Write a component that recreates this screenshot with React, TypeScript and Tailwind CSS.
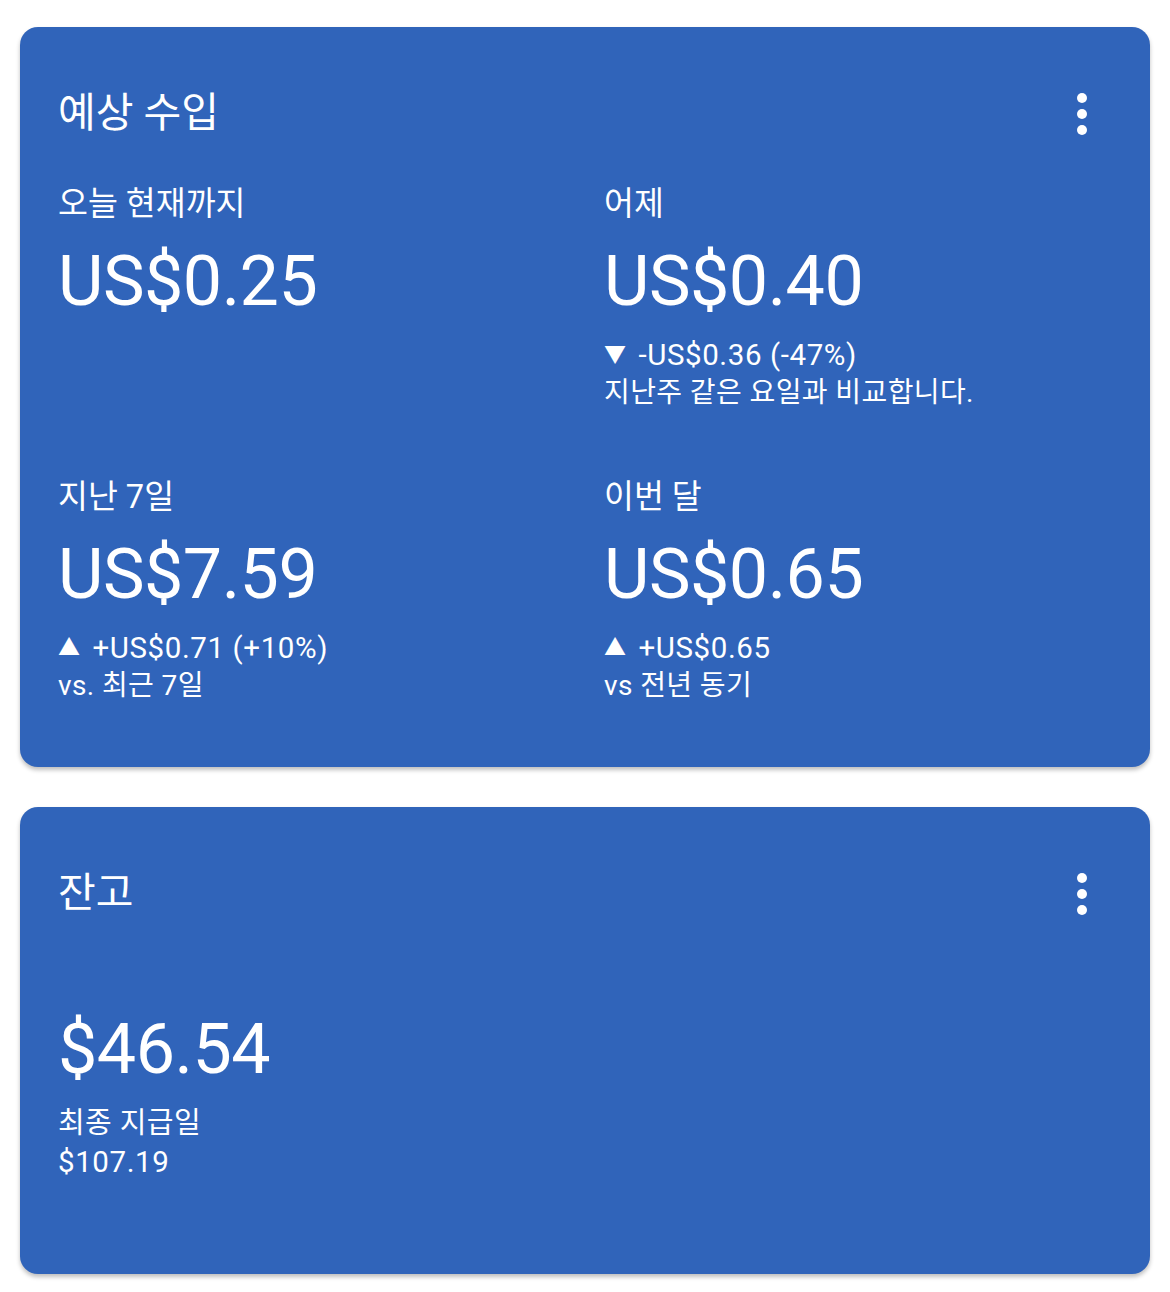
import React from "react";

const FONT = "font-['Roboto','Noto_Sans_CJK_KR',sans-serif]";

function MoreIcon() {
  return (
    <svg width="12" height="44" viewBox="0 0 12 44" className="fill-white">
      <circle cx="6" cy="6" r="5" />
      <circle cx="6" cy="22" r="5" />
      <circle cx="6" cy="38" r="5" />
    </svg>
  );
}

type Stat = {
  label: string;
  amount: string;
  delta?: { up: boolean; text: string; note: React.ReactNode };
};

// latin figures in the reference run a little wider than Roboto
const Num = ({ children }: { children: React.ReactNode }) => (
  <span className="text-[29.5px] tracking-[0.6px]">{children}</span>
);

const stats: Stat[] = [
  { label: "오늘 현재까지", amount: "US$0.25" },
  {
    label: "어제",
    amount: "US$0.40",
    delta: { up: false, text: "-US$0.36 (-47%)", note: "지난주 같은 요일과 비교합니다." },
  },
  {
    label: "지난 7일",
    amount: "US$7.59",
    delta: { up: true, text: "+US$0.71 (+10%)", note: "vs. 최근 7일" },
  },
  {
    label: "이번 달",
    amount: "US$0.65",
    delta: { up: true, text: "+US$0.65", note: "vs 전년 동기" },
  },
];

function StatBlock({ stat }: { stat: Stat }) {
  return (
    <div className="flex flex-col">
      <div className="text-[32.5px] leading-[40px]">{stat.label}</div>
      <div className="mt-[17px] text-[70px] leading-[80px] tracking-[-0.5px]">{stat.amount}</div>
      {stat.delta && (
        <div className="mt-[15px] text-[28px] leading-[38px] tracking-[0.4px]">
          <div className="flex items-center">
            <span className="mr-[12px] text-[22px]">{stat.delta.up ? "▲" : "▼"}</span>
            <Num>{stat.delta.text}</Num>
          </div>
          <div>{stat.delta.note}</div>
        </div>
      )}
    </div>
  );
}

function CardHeader({ title }: { title: string }) {
  return (
    <div className="flex items-center justify-between">
      <h2 className="text-[41px] leading-[48px]">{title}</h2>
      <div className="mr-[22px] mt-[2px]">
        <MoreIcon />
      </div>
    </div>
  );
}

export default function App() {
  return (
    <div className={`min-h-screen bg-white px-[20px] pt-[27px] pb-[18px] text-white ${FONT}`}>
      <div className="rounded-[18px] bg-[#3064ba] pl-[38px] pr-[40px] pt-[62px] pb-[62px] shadow-[0_3px_4px_rgba(0,0,0,0.25)]">
        <CardHeader title="예상 수입" />
        <div className="mt-[47px] grid grid-cols-2 gap-x-[40px] gap-y-[65px]">
          {stats.map((s) => (
            <StatBlock key={s.label} stat={s} />
          ))}
        </div>
      </div>

      <div className="mt-[40px] h-[467px] rounded-[18px] bg-[#3064ba] pl-[38px] pr-[40px] pt-[62px] shadow-[0_3px_4px_rgba(0,0,0,0.25)]">
        <CardHeader title="잔고" />
        <div className="mt-[92px] text-[70px] leading-[80px] tracking-[-0.5px]">$46.54</div>
        <div className="mt-[15px] text-[28px] leading-[39px] tracking-[0.4px]">
          <div className="text-[29px]">최종 지급일</div>
          <Num>$107.19</Num>
        </div>
      </div>
    </div>
  );
}
